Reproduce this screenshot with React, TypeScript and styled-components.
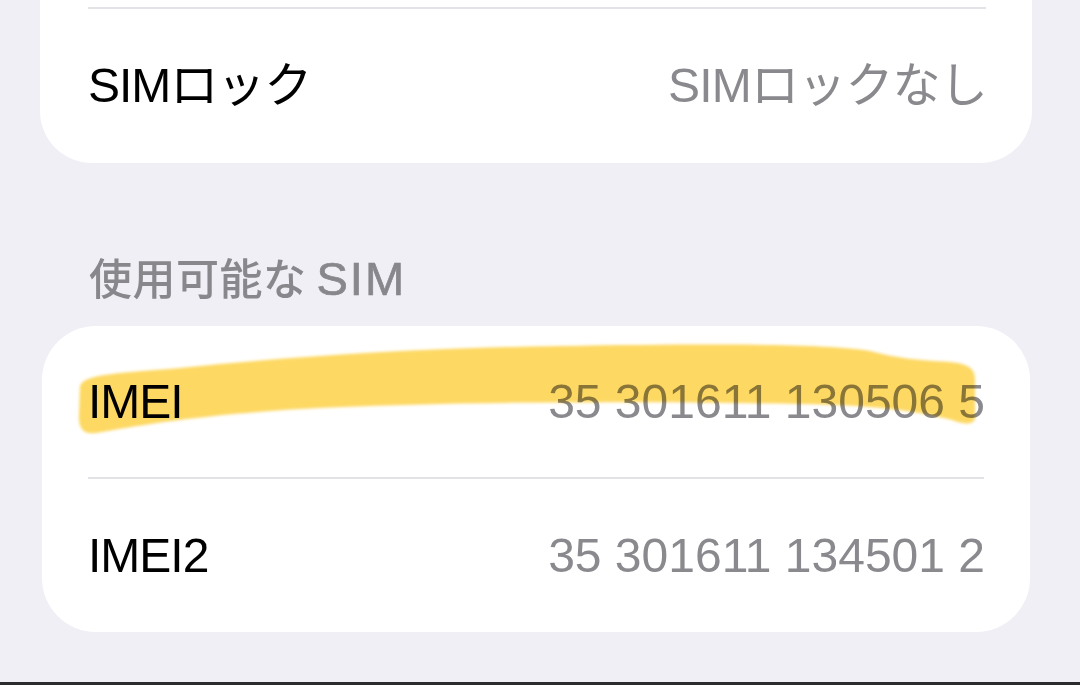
import React from "react";
import styled, { createGlobalStyle } from "styled-components";

const GlobalStyle = createGlobalStyle`
  html, body {
    margin: 0;
    padding: 0;
    background: #f0eff5;
  }
  body {
    font-family: "Liberation Sans", "Noto Sans CJK JP", sans-serif;
    -webkit-font-smoothing: antialiased;
  }
`;

const Page = styled.div`
  position: relative;
  width: 1080px;
  height: 685px;
  overflow: hidden;
  display: flex;
  flex-direction: column;
  background: #f0eff5;
`;

const Card = styled.div<{ $cut?: boolean }>`
  background: #ffffff;
  margin: 0 ${(p) => (p.$cut ? 48 : 50)}px 0 ${(p) => (p.$cut ? 40 : 42)}px;
  border-radius: ${(p) => (p.$cut ? "0 0 52px 52px" : "54px")};
  padding-top: ${(p) => (p.$cut ? 7 : 0)}px;
  display: flex;
  flex-direction: column;
`;

const Row = styled.div<{ $divided?: boolean; $h: number; $left: number; $right: number }>`
  height: ${(p) => p.$h}px;
  margin: 0 ${(p) => p.$right}px 0 ${(p) => p.$left}px;
  border-top: ${(p) => (p.$divided ? "2px solid #e2e2e7" : "none")};
  display: flex;
  align-items: center;
  justify-content: space-between;
  box-sizing: border-box;
`;

const Label = styled.span`
  font-size: 48px;
  line-height: 1;
  color: #000000;
  letter-spacing: -1px;
`;

const Value = styled.span<{ $tight?: boolean }>`
  font-size: 48px;
  line-height: 1;
  color: #8a8a8e;
  letter-spacing: ${(p) => (p.$tight ? "-0.8px" : "0")};
  position: relative;
  left: 1px;
`;

const SectionHeader = styled.div`
  height: 163px;
  box-sizing: border-box;
  padding: 92px 0 0 89px;
  font-size: 43px;
  font-weight: 500;
  line-height: 1;
  color: #87878c;
  letter-spacing: 0.5px;
  display: flex;
  align-items: baseline;
`;

const Latin = styled.span`
  margin-left: 10px;
  font-size: 47px;
  letter-spacing: 2px;
  font-weight: 400;
  -webkit-text-stroke: 0.7px #87878c;
`;

const Spacer = styled.div`
  flex: 1;
`;

const BottomEdge = styled.div`
  height: 3px;
  background: #2c2c2e;
`;

const Highlight = styled.svg`
  position: absolute;
  left: 0;
  top: 0;
  width: 1080px;
  height: 685px;
  pointer-events: none;
  mix-blend-mode: multiply;
`;

export default function App() {
  return (
    <>
      <GlobalStyle />
      <Page>
        <Card $cut>
          <Row $divided $h={156} $left={48} $right={46}>
            <Label>SIMロック</Label>
            <Value $tight>SIMロックなし</Value>
          </Row>
        </Card>
        <SectionHeader>
          使用可能な<Latin>SIM</Latin>
        </SectionHeader>
        <Card>
          <Row $h={151} $left={46} $right={46}>
            <Label>IMEI</Label>
            <Value>35 301611 130506 5</Value>
          </Row>
          <Row $divided $h={155} $left={46} $right={46}>
            <Label>IMEI2</Label>
            <Value>35 301611 134501 2</Value>
          </Row>
        </Card>
        <Spacer />
        <BottomEdge />
        <Highlight viewBox="0 0 1080 685">
          <defs>
            <filter id="soft" x="-5%" y="-30%" width="110%" height="160%">
              <feGaussianBlur stdDeviation="1.6" />
            </filter>
          </defs>
          <path
            filter="url(#soft)"
            fill="#fdd862"
            d="M 80 386
               C 84 374, 120 373, 180 368
               C 300 356, 420 348, 560 346
               C 700 344, 820 343, 870 351
               C 892 357, 912 360, 950 362
               C 968 364, 976 368, 975 382
               L 975 418
               C 974 425, 964 425, 952 420
               C 920 412, 880 405, 800 404
               C 650 401, 450 401, 300 409
               C 200 415, 140 425, 96 433
               C 83 435, 78 428, 79 414
               Z"
          />
        </Highlight>
      </Page>
    </>
  );
}
